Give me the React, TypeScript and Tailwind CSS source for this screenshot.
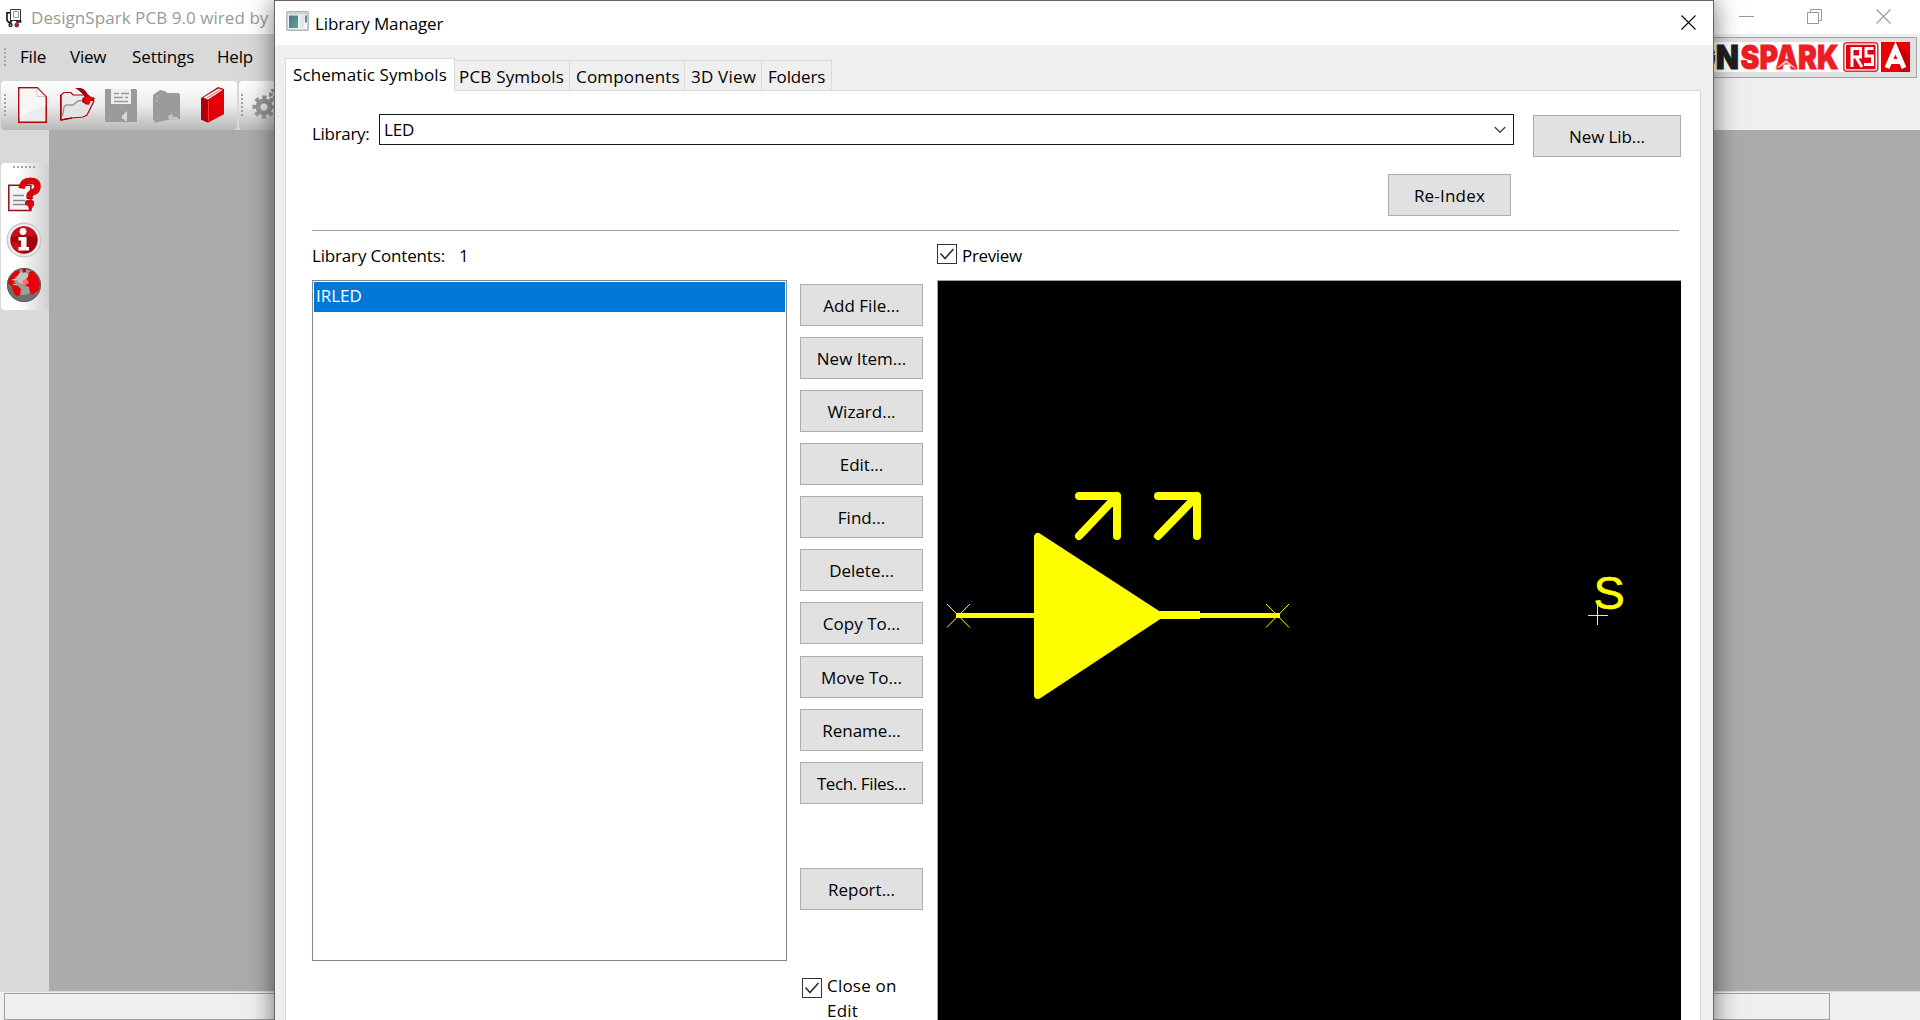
import type { ReactNode } from "react";

function Grip({ count = 6, horizontal = false }: { count?: number; horizontal?: boolean }) {
  return (
    <div className={horizontal ? "flex gap-[2px]" : "flex flex-col gap-[2px]"}>
      {Array.from({ length: count }, (_, i) => (
        <span key={i} className="block size-[2px] bg-[#a3a3a3]" />
      ))}
    </div>
  );
}

function AppIcon() {
  return (
    <svg width="16" height="20" viewBox="0 0 16 20" fill="none">
      <path d="M4.500 1.500h10v11h-10z" fill="#fff" stroke="#333" />
      <path d="M7.500 3.500h5v6h-5z" stroke="#999" />
      <path d="M4 4.700H1v7.500l1.500 2H5M14.500 12v2H11M5 12v2.500M11 12v2.500" stroke="#111" strokeWidth="1.600" />
      <circle cx="4.500" cy="17" r="2.200" fill="#222" />
      <circle cx="4.500" cy="17.300" r="0.800" fill="#ddd" />
      <circle cx="10.800" cy="17" r="2" fill="#e3121c" stroke="#222" strokeWidth=".7" />
    </svg>
  );
}

function NewFileIcon() {
  return (
    <svg width="29" height="36" viewBox="0 0 29 36">
      <path d="M.8.8h18.500L28.200 10v25.200H.8z" fill="#ececec" stroke="#b40008" strokeWidth="1.500" />
      <path d="M1.700 1.700h17l1 8h7.500v10L12 24 1.700 31z" fill="#f6f6f6" />
      <path d="M19 1.500v8h8z" fill="#fff" stroke="#ccc" strokeWidth="1" />
    </svg>
  );
}

function OpenIcon() {
  return (
    <svg width="36" height="36" viewBox="0 0 36 36">
      <path d="M.8 33V8l3-2.500h7L13 8h15l4 4 2 2-7 14-4 2-12 1z" fill="#eaeaea" stroke="#b00008" strokeWidth="1.200" />
      <path d="M.8 33V8M.8 33l11-2" stroke="#a00008" strokeWidth="1.600" />
      <path d="M3 31 5 20l7-2 6-4h9l3 2-4 11-4 2-10 1z" fill="#e3e3e3" />
      <path d="M2.500 29 4 20l2-2h7l5-4 6-1" fill="none" stroke="#969696" strokeWidth="1.400" />
      <path d="M15 1h6q6 2 7.500 9l6.500 1-2 3h-3l-3 4-5-3 .5-4 2-1Q22 5 15 1z" fill="#960810" />
      <path d="m24 11 5-2 6 2-4 2-2 5-5-3z" fill="#ee0005" />
    </svg>
  );
}

function SaveIcon() {
  return (
    <svg width="32" height="33" viewBox="0 0 32 33">
      <path d="M0 0h31l1 1v32H1l-1-2z" fill="#9b9b9b" />
      <path d="M6 0h20v15H6z" fill="#eee" />
      <path d="M9 4.500h5M16 4.500h8M9 8.500h9M20 8.500h3M9 12.500h14" stroke="#999" strokeWidth="1.300" />
      <path d="m22 22-5 5v3h2l1 2h2z" fill="#d8d8d8" />
    </svg>
  );
}

function LibraryGrayIcon() {
  return (
    <svg width="28" height="33" viewBox="0 0 28 33">
      <path d="M0 5 7 0l5 1 2 2h12l1 2v24l-12 1-10 2-2 1-3-3z" fill="#9b9b9b" />
      <path d="M3.500 10v4M4 7l3-3" stroke="#bdbdbd" strokeWidth="1.500" strokeDasharray="2 2" />
      <path d="m15 26 4-2 1 3h5v2l-9 1z" fill="#c4c4c4" />
    </svg>
  );
}

function BookIcon() {
  return (
    <svg width="24" height="36" viewBox="0 0 24 36">
      <path d="M0 11 17 0l6 2v25L7 35.500l-7-3z" fill="#c90009" />
      <path d="m7 13 16-9v23L7 35.500z" fill="#e20008" />
      <path d="M0 11v21.500l6.500 3V14z" fill="#ab0007" />
      <path d="M2.500 10.500 17.500 1.500l4 1.500L7 12.500z" fill="#fff" />
      <path d="M6 11 19.500 2.500" stroke="#c90009" strokeWidth=".7" />
      <path d="M7.500 14v20" stroke="#f33" strokeWidth="1" />
    </svg>
  );
}

function GearIcon() {
  return (
    <svg width="32" height="32" viewBox="0 0 32 32">
      <circle cx="12" cy="18" r="6" fill="none" stroke="#989898" strokeWidth="5" />
      <circle cx="12" cy="18" r="9.600" fill="none" stroke="#989898" strokeWidth="4" strokeDasharray="4 3.540" strokeDashoffset="2" />
      <circle cx="23" cy="5" r="4" fill="none" stroke="#989898" strokeWidth="4" strokeDasharray="3.500 1.500" />
    </svg>
  );
}

function HelpDocIcon() {
  return (
    <svg width="34" height="36" viewBox="0 0 34 36">
      <path d="M1.800 8.300h22V33.500h-22z" fill="#f4f4f4" stroke="#8c1218" strokeWidth="1.500" />
      <path d="M6 18.500h11M6 23.500h12M6 27.500h12" stroke="#888" strokeWidth="1.400" />
      <path d="M14.500 11.500Q16 3.800 23 3.800q7.500 0 7.500 5.700 0 4-4 5.500-4.500 1.500-4 6" fill="none" stroke="#d8060e" strokeWidth="6.500" />
      <path d="M18 24q4.500-3 9 0v4l-3 5h-2l-1-4-3-1z" fill="#d8060e" />
      <path d="M20 21.500h6" stroke="#a00008" strokeWidth="1" />
    </svg>
  );
}

function InfoIcon() {
  return (
    <svg width="36" height="36" viewBox="0 0 36 36">
      <circle cx="18" cy="18" r="16.800" fill="#ededed" stroke="#c9c9c9" strokeWidth="1.400" />
      <circle cx="18" cy="18" r="13.700" fill="#a0060d" />
      <path d="M5 15Q8 5 18 4.500 28 5 31 15 18 12 5 15z" fill="#c8101a" />
      <path d="M5 20q3 11 13 11.500L13 20z" fill="#c8101a" />
      <circle cx="17" cy="9.500" r="3.400" fill="#fff" />
      <path d="M12.500 15H20.500V25h2.500v3.500h-10.500V25h2.500v-6.500h-2.500z" fill="#fff" />
    </svg>
  );
}

function GlobeIcon() {
  return (
    <svg width="36" height="36" viewBox="0 0 36 36">
      <circle cx="18" cy="18" r="17" fill="#6f6f6f" />
      <circle cx="17" cy="15" r="13" fill="#9c9c9c" />
      <circle cx="17" cy="11" r="6" fill="#c4c4c4" />
      <path d="m4 10 5-6 5-1-1 4-4 4-1 4 4 4 3 3-1 6-4 1-3-5-2-5-3-3v-3z" fill="#e3040b" />
      <path d="m16 1 4 0v4l-3 1z" fill="#d3040b" />
      <path d="m23 5 4-1 4 5 3 7-1 7-3 2-4 3-2-2-1-6-5-2 1-5 3-3z" fill="#e80008" />
      <path d="m16 14 5-2 2 4-5 3z" fill="#ff6b6b" />
      <path d="m6 13 5-1M7 17l4 1" stroke="#ddd" strokeWidth="1.200" />
      <circle cx="18" cy="18" r="16.600" fill="none" stroke="#5f5f5f" strokeWidth=".9" />
    </svg>
  );
}

function CloseGlyph({ color }: { color: string }) {
  return (
    <svg width="15" height="15" viewBox="0 0 15 15" stroke={color} strokeWidth="1.100">
      <path d="M.5.500l14 14M14.500.500l-14 14" />
    </svg>
  );
}

function BrandLogo() {
  return (
    <svg width="230" height="30" viewBox="0 0 230 30">
      <rect width="230" height="30" fill="#fff" />
      <g fontFamily="Inter" fontWeight="900" fontSize="33" strokeWidth=".8">
        <text x="13" y="27.200" fill="#221f20" stroke="#221f20" textLength="46" lengthAdjust="spacingAndGlyphs">GN</text>
        <text x="60.500" y="27.200" fill="#ee1c25" stroke="#ee1c25" textLength="98" lengthAdjust="spacingAndGlyphs">SPARK</text>
      </g>
      <path d="m95 27 11-9 11 9-5-2-6-4-6 4z" fill="#fff" fillOpacity=".7" />
      <rect x="163.800" y=".8" width="34" height="28.500" rx="3" fill="#fff" stroke="#e2303a" strokeWidth="1.500" />
      <rect x="166" y="2.800" width="29.500" height="24.400" rx="1" fill="#e30010" />
      <g fill="none" stroke="#fff" strokeWidth="3">
        <path d="M172 25V6.500h8.500V15H173M176 15l6 10" />
        <path d="M193.500 6.500H186V14h6.500v8.500H184" />
      </g>
      <rect x="201" width="29" height="30" fill="#e60008" />
      <path d="m219 6 11 6v18h-10z" fill="#c30007" />
      <path d="M207 26 215.500 6 224 26M210 19.500h11" fill="none" stroke="#fff" strokeWidth="5" />
    </svg>
  );
}

function MainWindow() {
  return (
    <div className="flex h-full flex-col">
      <header className="flex h-[34px] items-center justify-between bg-white pr-[29px] pl-[6px] text-[#999]">
        <div className="flex items-center gap-[9px] pt-px">
          <AppIcon />
          <span className="tracking-[0.06px] whitespace-nowrap">DesignSpark PCB 9.0 wired by</span>
        </div>
        <div className="flex items-center gap-[53px] pb-px">
          <span className="block h-px w-[15px] bg-[#999]" />
          <svg width="16" height="16" viewBox="0 0 16 16" fill="none" stroke="#999">
            <path d="M.5 3.500h11v11H.5zM3.500 3.500V.5h11v11h-3" />
          </svg>
          <CloseGlyph color="#999" />
        </div>
      </header>

      <div className="flex h-[96px] justify-between bg-[#efefef]">
        <div className="w-[400px] bg-[#d9d9d9]">
          <nav className="flex h-[47px] items-center pb-[2px] pl-1">
            <Grip count={5} />
            <span className="ml-[14px] w-[50px] tracking-[-0.2px]">File</span>
            <span className="w-[62px] tracking-[-0.25px]">View</span>
            <span className="w-[85px] tracking-[-0.1px]">Settings</span>
            <span className="tracking-[-0.2px]">Help</span>
          </nav>
          <div className="flex h-[49px] gap-[2px] pl-px">
            <div className="flex w-[236px] items-center rounded bg-linear-to-b from-white via-[#ececec] to-[#b9b9b9] pb-px pl-[3px]">
              <Grip />
              <div className="ml-[12px] flex items-center">
                <NewFileIcon />
                <div className="ml-[13px]"><OpenIcon /></div>
                <div className="ml-[9px]"><SaveIcon /></div>
                <div className="mt-[2px] ml-[16px]"><LibraryGrayIcon /></div>
                <div className="ml-[20px]"><BookIcon /></div>
              </div>
            </div>
            <div className="flex flex-1 items-center gap-[9px] rounded bg-linear-to-b from-white via-[#ececec] to-[#b9b9b9] pb-px pl-[2px]">
              <Grip />
              <GearIcon />
            </div>
          </div>
        </div>
        <div className="mt-[3px] mr-[3px] flex h-[41px] items-center justify-end border border-[#a5a5a5] bg-[#e1e1e1] pr-[6px] pb-[2px] pl-4">
          <BrandLogo />
        </div>
      </div>

      <div className="flex flex-1 bg-[#ababab]">
        <aside className="w-[49px] bg-[#d9d9d9] pt-[33px] pl-px">
          <div className="flex h-[147px] flex-col items-center rounded-sm bg-linear-to-r from-white from-35% to-[#cfcfcf] pt-[3px] pr-[3px]">
            <Grip horizontal />
            <div className="mt-[9px]"><HelpDocIcon /></div>
            <div className="mt-[9px]"><InfoIcon /></div>
            <div className="mt-[9px]"><GlobeIcon /></div>
          </div>
        </aside>
      </div>

      <footer className="h-[29px] border-t border-[#d8d8d8] bg-[#efefef] pt-px pl-1">
        <div className="h-[27px] w-[1826px] border border-[#a0a0a0]" />
      </footer>
    </div>
  );
}

function Button({ children, className = "w-[123px]" }: { children: ReactNode; className?: string }) {
  return (
    <button className={`flex h-[42px] shrink-0 items-center justify-center border border-[#adadad] bg-[#e1e1e1] pt-px whitespace-nowrap ${className}`}>
      {children}
    </button>
  );
}

function Checkbox() {
  return (
    <span className="flex size-5 shrink-0 items-center justify-center border border-[#333] bg-white">
      <svg width="16" height="14" viewBox="0 0 16 14" fill="none" stroke="#333" strokeWidth="1.700">
        <path d="M1.500 6.500 6 11.500 14.500 2" />
      </svg>
    </span>
  );
}

function SymbolPreview() {
  return (
    <div className="h-[780px] w-[744px] overflow-hidden border-t border-l border-[#a0a0a0] bg-black">
      <svg width="743" height="739" viewBox="938 281 743 739" stroke="#ff0" fill="none">
        <path d="M947 604l23 23.500M970 604l-23 23.500M1266 604l23 23.500M1289 604l-23 23.500" />
        <path d="M956 615.500H1280" strokeWidth="5" />
        <path d="M1038 537V695L1158.500 615.300z" fill="#ff0" strokeWidth="8" strokeLinejoin="round" />
        <path d="M1158 615H1200" strokeWidth="8" />
        <path d="M1079 496H1117V536M1079 536L1117 496M1158 496H1197V536M1158 536L1197 496" strokeWidth="8" strokeLinecap="round" strokeLinejoin="round" />
        <path d="M1588 615.500h20M1597.500 604v21" />
        <text x="1593.500" y="609" fill="#ff0" strokeWidth=".6" fontFamily="Liberation Sans" fontSize="47">S</text>
      </svg>
    </div>
  );
}

const TABS = [
  { label: "PCB Symbols", cls: "w-[115px] pl-[4px] tracking-[0.2px]" },
  { label: "Components", cls: "w-[115px] pl-[6px] tracking-[0.2px]" },
  { label: "3D View", cls: "w-[77px] pl-[6px] tracking-[0.2px]" },
  { label: "Folders", cls: "w-[70px] pl-[6px] tracking-[-0.15px]" },
];

function LibraryManager() {
  return (
    <section className="absolute top-0 left-[274px] flex h-[1060px] w-[1440px] flex-col border border-[#666] bg-[#efefef] shadow-[0_0_24px_rgba(0,0,0,0.55)]">
      <header className="flex h-[44px] shrink-0 items-center justify-between bg-white pr-[17px] pl-[11px]">
        <div className="flex items-center gap-[6px] pt-px">
          <svg width="23" height="20" viewBox="0 0 23 20" className="mb-[5px]">
            <defs>
              <linearGradient id="pane" x1="0" y1="0" x2="1" y2="1">
                <stop offset="0" stopColor="#4d6f9f" />
                <stop offset="1" stopColor="#58ad74" />
              </linearGradient>
            </defs>
            <rect x=".8" y=".8" width="21.400" height="18.400" rx="1" fill="#f1f2f3" stroke="#aeb4ba" strokeWidth="1.500" />
            <path d="M1.500 2.500h20" stroke="#ccd3da" strokeWidth="2" />
            <rect x="3" y="4.500" width="9" height="12.500" fill="url(#pane)" />
            <path d="M14 4.500h4v12h-4z" fill="#e2e4e5" />
            <path d="M19 4.500h2v7h-2z" fill="url(#pane)" />
          </svg>
          <h1 className="tracking-[-0.12px]">Library Manager</h1>
        </div>
        <div className="-mt-[2px]"><CloseGlyph color="#000" /></div>
      </header>

      <div className="mt-[13px] ml-[10px] flex h-[33px] items-end">
        <div className="z-10 h-[33px] w-[170px] border border-b-0 border-[#d9d9d9] bg-white pt-[4px] pl-[7px] tracking-[0.1px]">Schematic Symbols</div>
        {TABS.map((t) => (
          <div key={t.label} className={`flex h-[31px] items-center border-t border-r border-[#d9d9d9] pt-[2px] ${t.cls}`}>
            {t.label}
          </div>
        ))}
      </div>

      <div className="-mt-px ml-[10px] h-[960px] w-[1416px] shrink-0 border border-[#d9d9d9] bg-white pl-[26px]">
        <div className="flex items-start pt-[23px]">
          <label className="w-[67px] pt-[8px] tracking-[-0.3px]">Library:</label>
          <div className="flex h-[31px] w-[1135px] items-center justify-between border border-[#1a1a1a] pr-[7px] pl-[4px]">
            <span className="pt-px tracking-[-0.2px]">LED</span>
            <svg width="12" height="8" viewBox="0 0 12 8" fill="none" stroke="#444" strokeWidth="1.300">
              <path d="M.7 1 6 6.300 11.300 1" />
            </svg>
          </div>
          <div className="mt-px ml-[19px]">
            <Button className="w-[148px] tracking-[-0.1px]">New Lib...</Button>
          </div>
        </div>
        <div className="mt-[17px] ml-[1076px]">
          <Button className="w-[123px] tracking-[0.2px]">Re-Index</Button>
        </div>
        <div className="mt-[14px] h-px w-[1367px] bg-[#a0a0a0]" />

        <div className="flex">
          <div className="w-[475px]">
            <div className="flex h-[49px] items-center gap-[14px]">
              <span className="tracking-[-0.17px]">Library Contents:</span>
              <span>1</span>
            </div>
            <div className="h-[681px] border border-[#828790] p-px">
              <div className="h-[30px] bg-[#0078d7] pt-[2px] pl-[2px] text-white">IRLED</div>
            </div>
          </div>

          <div className="ml-[13px] flex w-[123px] flex-col gap-[11px] pt-[53px]">
            <Button>Add File...</Button>
            <Button>New Item...</Button>
            <Button>Wizard...</Button>
            <Button>Edit...</Button>
            <Button>Find...</Button>
            <Button>Delete...</Button>
            <Button>Copy To...</Button>
            <div className="mt-px"><Button>Move To...</Button></div>
            <Button>Rename...</Button>
            <Button className="w-[123px] tracking-[-0.4px]">Tech. Files...</Button>
            <div className="mt-[53px]"><Button>Report...</Button></div>
            <div className="mt-[57px] flex gap-[5px] pl-[2px]">
              <Checkbox />
              <span className="-mt-[4px] w-[80px] leading-[24.500px] tracking-[0.2px]">Close on Edit</span>
            </div>
          </div>

          <div className="ml-[14px]">
            <div className="flex h-[49px] items-center gap-[5px]">
              <span className="-mt-[3px]"><Checkbox /></span>
              <span className="tracking-[-0.35px]">Preview</span>
            </div>
            <SymbolPreview />
          </div>
        </div>
      </div>
    </section>
  );
}

export default function App() {
  return (
    <div className="relative h-[1020px] w-[1920px] overflow-hidden bg-[#efefef] font-['Open_Sans',sans-serif] text-[17px] leading-[24px] text-black">
      <MainWindow />
      <LibraryManager />
    </div>
  );
}
